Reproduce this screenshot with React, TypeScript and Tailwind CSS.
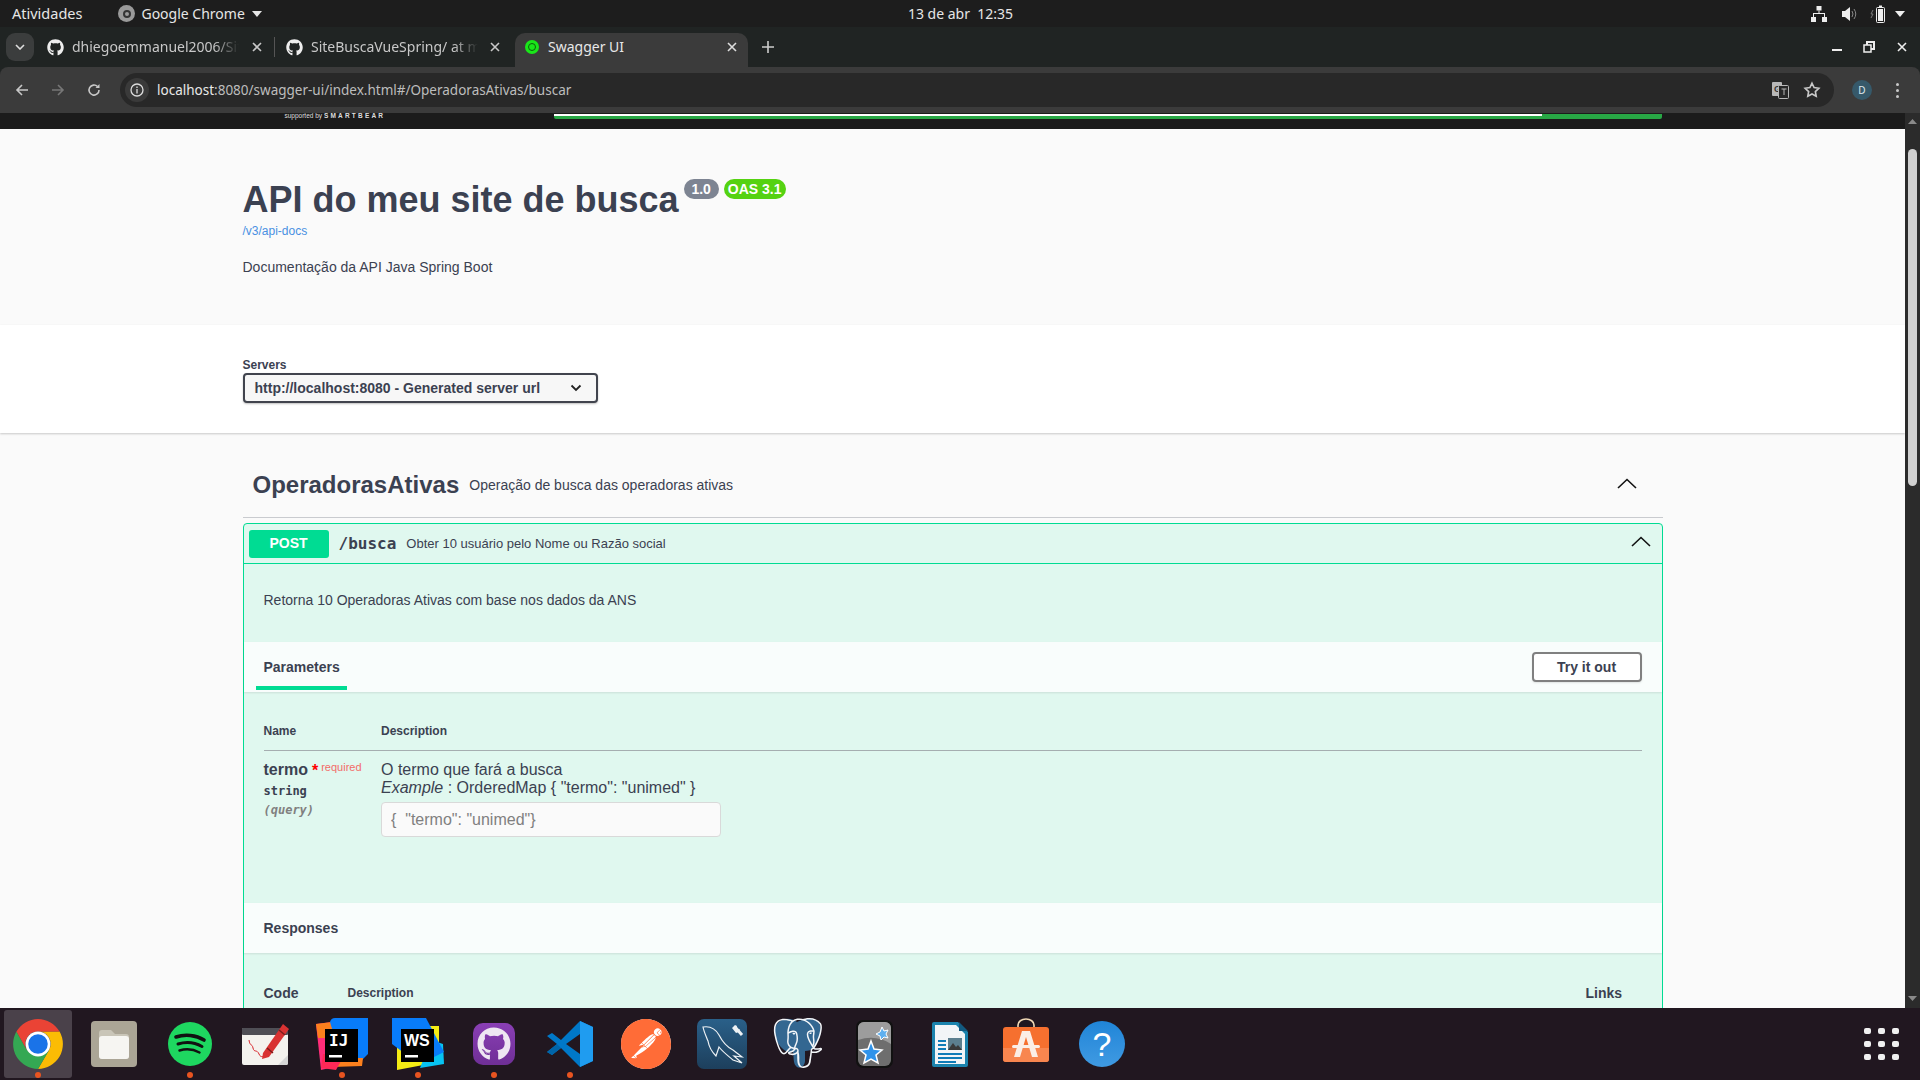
import React from "react";
import { FaGithub } from "react-icons/fa";
import { SiPostgresql, SiPostman } from "react-icons/si";

const sans = "font-['Liberation_Sans',Arial,sans-serif]";
const mono = "font-['DejaVu_Sans_Mono',monospace]";

const ChevronUp = () => (
  <svg width="20" height="11" viewBox="0 0 20 11" fill="none">
    <polyline points="1,10 10,1.5 19,10" stroke="#111" strokeWidth="1.6" />
  </svg>
);

const CloseX = ({ color = "#c8c8c8" }: { color?: string }) => (
  <svg width="12" height="12" viewBox="0 0 12 12" fill="none">
    <path d="M2 2l8 8M10 2l-8 8" stroke={color} strokeWidth="1.6" />
  </svg>
);

const Chrome = ({ size = 52 }: { size?: number }) => (
  <svg width={size} height={size} viewBox="0 0 48 48">
    <path d="M43.9 12.5A23 23 0 0 1 24 47L34 30A11.5 11.5 0 0 0 24 12.5Z" fill="#fbbc04" />
    <path d="M4.1 12.5A23 23 0 0 0 24 47L34 30H14Z" fill="#34a853" />
    <path d="M4.1 12.5A23 23 0 0 1 43.9 12.5H24A11.5 11.5 0 0 0 14 30Z" fill="#ea4335" />
    <circle cx="24" cy="24" r="11.5" fill="#fff" />
    <circle cx="24" cy="24" r="9" fill="#1a73e8" />
  </svg>
);

const Files = () => (
  <svg width="46" height="46" viewBox="0 0 46 46">
    <rect width="46" height="46" rx="4" fill="#aba596" />
    <path d="M8 12a3 3 0 0 1 3-3h9l4 4h11a3 3 0 0 1 3 3v19a3 3 0 0 1-3 3H11a3 3 0 0 1-3-3Z" fill="#c9c5b8" />
    <path d="M8 18a3 3 0 0 1 3-3h24a3 3 0 0 1 3 3v17a3 3 0 0 1-3 3H11a3 3 0 0 1-3-3Z" fill="#f6f5f2" />
  </svg>
);

const Spotify = () => (
  <svg width="44" height="44" viewBox="0 0 44 44" fill="none">
    <circle cx="22" cy="22" r="22" fill="#1ed760" />
    <path d="M8 15c9-3 20-2 28 3" stroke="#111" strokeWidth="3.6" strokeLinecap="round" />
    <path d="M10 22c8-2.5 17-1.5 24 2.5" stroke="#111" strokeWidth="3" strokeLinecap="round" />
    <path d="M11.5 28.5c7-2 14-1.2 20 2" stroke="#111" strokeWidth="2.5" strokeLinecap="round" />
  </svg>
);

const Editor = () => (
  <svg width="48" height="42" viewBox="0 0 48 42">
    <rect y="5" width="46" height="37" rx="2" fill="#f4f2ee" />
    <rect y="5" width="46" height="7" rx="1" fill="#4f4e55" />
    <path d="M36 42l10-10v8a2 2 0 0 1-2 2Z" fill="#d6d6d6" />
    <path d="M7 17c1 7 3 3 4 8s4 1 6 6 5 1 7 2" stroke="#d8232a" strokeWidth="1" fill="none" />
    <path d="M21 30L41 1l6 5L27 34l-7 2Z" fill="#d93232" />
    <path d="M25 25l6 5M37 7l6 5" stroke="#7d1c1c" strokeWidth="1.5" />
  </svg>
);

const IntelliJ = () => (
  <svg width="52" height="52" viewBox="0 0 52 52">
    <path d="M0 6l16-2 6 44-17 4Z" fill="#ff2d78" />
    <path d="M0 6l16-2 4 16H2Z" fill="#fc801d" />
    <path d="M14 4q1-4 5-4h33v36l-8 8H26Z" fill="#087cfa" />
    <path d="M20 40h27l-1 8-30 1Z" fill="#fc801d" />
    <path d="M5 50l2-14h22l-9 16Z" fill="#fe2857" />
    <rect x="9" y="11" width="33" height="33" fill="#000" />
    <text x="13" y="28" fontFamily="DejaVu Sans Mono, monospace" fontSize="16" fontWeight="700" fill="#fff">IJ</text>
    <rect x="13" y="37" width="13" height="2.5" fill="#fff" />
  </svg>
);

const WebStorm = () => (
  <svg width="52" height="52" viewBox="0 0 52 52">
    <path d="M5 8h42v36L5 52Z" fill="#f5ec14" />
    <path d="M28 50l24-4-1-20-12-4Z" fill="#07c3f2" />
    <path d="M0 0h34l18 34-12 6-24-2-16-12Z" fill="#087cfa" />
    <rect x="9" y="11" width="33" height="33" fill="#000" />
    <text x="12" y="28" fontFamily="Liberation Sans, sans-serif" fontSize="16" fontWeight="700" fill="#fff">WS</text>
    <rect x="13" y="37" width="13" height="2.5" fill="#fff" />
  </svg>
);

const GitHubDock = () => (
  <div className="w-[42px] h-[42px] rounded-[10px] bg-gradient-to-b from-[#8a3fb5] to-[#6f2f96] flex items-center justify-center">
    <FaGithub size={34} color="#eee6f2" />
  </div>
);

const VSCode = () => (
  <svg width="46" height="46" viewBox="0 0 46 46">
    <path d="M33 0l13 6v34l-13 6L14 27 5 34 0 31l10-8L0 15l5-3 9 7Z" fill="#0078c8" />
    <path d="M33 0l13 6v34l-13 6Z" fill="#1f9cf0" />
    <path d="M33 13v20L19 23Z" fill="#211720" />
    <path d="M0 31l5 3 9-7-4-4Z" fill="#0065a9" />
  </svg>
);

const Postman = () => (
  <div className="w-[50px] h-[50px] rounded-full bg-white flex items-center justify-center">
    <SiPostman size={50} color="#ff6c37" />
  </div>
);

// Workbench icon: dolphin outline plus a small wrench
const MySQLDock = () => (
  <svg width="50" height="50" viewBox="0 0 50 50">
    <defs>
      <linearGradient id="wb" x1="0" y1="0" x2="0" y2="1">
        <stop offset="0" stopColor="#2a6089" />
        <stop offset="1" stopColor="#1d3f5c" />
      </linearGradient>
    </defs>
    <rect width="50" height="50" rx="7" fill="url(#wb)" />
    <path
      d="M6 8C12 7 18 9 22 16C26 24 30 28 36 31L45 38L37 37L45 44L36 41C30 36 26 33 22 28L19 37C15 33 12 28 11 22C9 17 7 13 6 8Z"
      fill="none"
      stroke="#eef2f5"
      strokeWidth="1.2"
    />
    <path d="M38 8l7 8" stroke="#eef2f5" strokeWidth="3" />
    <path d="M35 9l3-3 2 1-1 3 2 1 2-1-1 3-3 1Z" fill="#eef2f5" />
  </svg>
);

const Postgres = () => (
  <div className="relative w-[50px] h-[52px]">
    <svg width="50" height="52" viewBox="0 0 50 52" className="absolute inset-0">
      <path d="M4 6c6-7 14-6 20-2 7-4 17-5 22 1 4 7 1 17-5 24-2 3-6 4-9 4v10c0 5-6 9-9 5-3-3-2-9-3-14-5 1-11-2-15-9C1 19 0 11 4 6Z" fill="#336791" />
    </svg>
    <SiPostgresql size={50} color="#f3f6f9" className="absolute inset-0" />
  </div>
);

const Anki = () => (
  <svg width="37" height="48" viewBox="0 0 37 48">
    <rect width="37" height="48" rx="7" fill="#111" />
    <rect x="2" y="2" width="33" height="44" rx="6" fill="#6e6e6e" />
    <path d="M2 8a6 6 0 0 1 6-6h21a6 6 0 0 1 6 6v16Q20 14 2 20Z" fill="#9c9c9c" />
    <path d="M26 7l2 4 4-1-2 4 2 4-4-1-3 3-1-4-4-2 4-2Z" fill="#5fb0ef" stroke="#fff" />
    <path d="M15 21l3 8 8 1-6 5 2 8-7-4-7 4 2-8-6-5 8-1Z" fill="#2f93ea" stroke="#fff" strokeWidth="1.5" />
  </svg>
);

const Writer = () => (
  <svg width="36" height="45" viewBox="0 0 36 45">
    <path d="M2 0h24l10 10v33a2 2 0 0 1-2 2H2a2 2 0 0 1-2-2V2a2 2 0 0 1 2-2Z" fill="#1b83ad" />
    <path d="M3 3h21l9 9v30H3Z" fill="#f2f5f7" />
    <path d="M27 0l9 9h-9Z" fill="#135a80" />
    <rect x="6" y="18" width="8" height="2" fill="#0f7cb8" />
    <rect x="6" y="22" width="8" height="2" fill="#0f7cb8" />
    <rect x="6" y="26" width="8" height="2" fill="#0f7cb8" />
    <rect x="16" y="16" width="14" height="12" fill="#5c7f8f" />
    <path d="M16 28l5-7 3 4 2-2 4 5Z" fill="#3a3a3a" />
    <rect x="6" y="31" width="24" height="2" fill="#0f7cb8" />
    <rect x="6" y="35" width="24" height="2" fill="#0f7cb8" />
    <rect x="6" y="39" width="18" height="2" fill="#0f7cb8" />
  </svg>
);

const AppStore = () => (
  <svg className="mb-[8px]" width="46" height="44" viewBox="0 0 46 44">
    <path d="M15 10V7a8 6 0 0 1 16 0v3" stroke="#f0d9b5" strokeWidth="1.6" fill="none" />
    <rect y="9" width="46" height="35" rx="3" fill="#f6702f" />
    <path d="M0 30h46v11a3 3 0 0 1-3 3H3a3 3 0 0 1-3-3Z" fill="#f8864f" />
    <path d="M19 13h8l8 26h-6l-6-20-6 20h-6Z" fill="#fbeee6" />
    <rect x="9" y="27" width="28" height="3" rx="1.5" fill="#fbeee6" />
  </svg>
);

const Help = () => (
  <div className={`w-[46px] h-[46px] rounded-full bg-gradient-to-b from-[#1f85d8] to-[#3f9ae2] flex items-center justify-center text-white text-[34px] leading-none ${sans}`}>
    ?
  </div>
);

// dock slots are 76px wide, running dots only on the open apps
const dockApps: { icon: React.ReactNode; running?: boolean; active?: boolean }[] = [
  { icon: <Chrome />, running: true, active: true },
  { icon: <Files /> },
  { icon: <Spotify />, running: true },
  { icon: <Editor /> },
  { icon: <IntelliJ />, running: true },
  { icon: <WebStorm />, running: true },
  { icon: <GitHubDock />, running: true },
  { icon: <VSCode />, running: true },
  { icon: <Postman /> },
  { icon: <MySQLDock /> },
  { icon: <Postgres /> },
  { icon: <Anki /> },
  { icon: <Writer /> },
  { icon: <AppStore /> },
  { icon: <Help /> },
];

const OsBar = () => (
  <div className="h-[27px] shrink-0 bg-[#1d1d1d] flex items-center text-[#e6e6e6] text-[14px] font-['Noto_Sans',sans-serif]">
    <div className="flex-1 flex items-center pl-3">
      <span className="text-[14.5px]">Atividades</span>
      <span className="ml-[36px] w-[17px] h-[17px] rounded-full bg-[#9a9a9a] flex items-center justify-center">
        <span className="w-[8px] h-[8px] rounded-full border-2 border-[#333]" />
      </span>
      <span className="ml-[6px]">Google Chrome</span>
      <svg className="ml-[7px]" width="10" height="6" viewBox="0 0 10 6">
        <path d="M0 0h10L5 6Z" fill="#e6e6e6" />
      </svg>
    </div>
    <span className="ml-[4px] whitespace-pre">13 de abr  12:35</span>
    <div className="flex-1 flex items-center justify-end pr-[15px]">
      <svg width="16" height="16" viewBox="0 0 16 16" fill="#eee">
        <rect x="5.5" y="0" width="5" height="4.5" />
        <rect x="0" y="11" width="5" height="5" />
        <rect x="11" y="11" width="5" height="5" />
        <path d="M7.5 4.5h1V7H14v4h-1V8H3v3H2V7h5.5Z" />
      </svg>
      <svg className="ml-[14px]" width="16" height="16" viewBox="0 0 16 16" fill="#eee">
        <path d="M1 5h3l5-4v14l-5-4H1Z" />
        <path d="M11 5q2 3 0 6M13 3q3.500 5 0 10" stroke="#888" fill="none" />
      </svg>
      <svg className="ml-[13px]" width="18" height="18" viewBox="0 0 18 18">
        <path d="M3 5L1 9h2l-2 4" stroke="#777" fill="none" />
        <rect x="6.500" y="2.500" width="8" height="15" rx="1" fill="none" stroke="#eee" />
        <rect x="8" y="4" width="5" height="12" fill="#eee" />
        <rect x="9" y="0.500" width="3" height="2" fill="#eee" />
      </svg>
      <svg className="ml-[7px]" width="10" height="6" viewBox="0 0 10 6">
        <path d="M0 0h10L5 6Z" fill="#eee" />
      </svg>
    </div>
  </div>
);

const TabStrip = () => (
  <div className="h-[40px] shrink-0 bg-[#202423] flex items-center text-[14px] font-['Noto_Sans',sans-serif]">
    <div className="ml-[6px] w-[28px] h-[28px] rounded-[9px] bg-[#3b3d3d] flex items-center justify-center">
      <svg width="10" height="6" viewBox="0 0 10 6" fill="none">
        <path d="M1 1l4 4 4-4" stroke="#ddd" strokeWidth="1.6" />
      </svg>
    </div>
    <div className="ml-[13px] w-[228px] h-[20px] flex items-center border-r border-[#555] text-[#c8c8c8]">
      <FaGithub size={17} color="#eee" className="shrink-0" />
      <div className="ml-2 w-[167px] -mt-[2px] overflow-hidden whitespace-nowrap [mask-image:linear-gradient(to_right,black_85%,transparent)]">
        dhiegoemmanuel2006/SiteBuscaVueSpring
      </div>
      <span className="ml-3">
        <CloseX />
      </span>
    </div>
    <div className="w-[240px] h-[20px] pl-[11px] flex items-center text-[#c8c8c8]">
      <FaGithub size={17} color="#eee" className="shrink-0" />
      <div className="ml-2 w-[167px] -mt-[2px] overflow-hidden whitespace-nowrap [mask-image:linear-gradient(to_right,black_85%,transparent)]">
        SiteBuscaVueSpring/ at main · dhiego
      </div>
      <span className="ml-[11px]">
        <CloseX />
      </span>
    </div>
    <div className="self-end w-[233px] h-[34px] rounded-t-[10px] bg-[#3b3b3b] pl-[10px] pr-[10px] pb-[6px] flex items-center text-[#e8e8e8]">
      <span className="w-[14px] h-[14px] rounded-full bg-[#19e619] flex items-center justify-center">
        <span className="w-[8px] h-[8px] rounded-full border border-[#0b5f0b]" />
      </span>
      <span className="ml-[9px] -mt-[1px]">Swagger UI</span>
      <span className="ml-auto">
        <CloseX color="#ddd" />
      </span>
    </div>
    <svg className="ml-[14px]" width="12" height="12" viewBox="0 0 12 12" fill="none">
      <path d="M6 0v12M0 6h12" stroke="#ccc" strokeWidth="1.600" />
    </svg>
    <div className="ml-auto flex items-center pr-[2px]">
      <div className="w-[32px] flex justify-center">
        <span className="mt-[6px] w-[10px] h-[2px] bg-[#eee]" />
      </div>
      <div className="w-[32px] flex justify-center">
        <svg width="12" height="12" viewBox="0 0 12 12" fill="none">
          <rect x="4" y="1" width="7" height="7" stroke="#eee" strokeWidth="2" />
          <rect x="1" y="4" width="7" height="7" fill="#202423" stroke="#eee" strokeWidth="1.500" />
        </svg>
      </div>
      <div className="w-[33px] flex justify-center">
        <CloseX color="#eee" />
      </div>
    </div>
  </div>
);

const Toolbar = () => (
  <div className="h-[46px] shrink-0 bg-[#3b3b3b] rounded-t-[8px] flex items-center font-['Noto_Sans',sans-serif]">
    <div className="ml-[4px] w-[36px] flex justify-center">
      <svg width="14" height="14" viewBox="0 0 14 14" fill="none">
        <path d="M13 7H2M7 2L2 7l5 5" stroke="#c8c8c8" strokeWidth="1.600" />
      </svg>
    </div>
    <div className="w-[36px] flex justify-center">
      <svg width="14" height="14" viewBox="0 0 14 14" fill="none">
        <path d="M1 7h11M7 2l5 5-5 5" stroke="#777" strokeWidth="1.600" />
      </svg>
    </div>
    <div className="w-[36px] flex justify-center">
      <svg width="14" height="14" viewBox="0 0 14 14" fill="none">
        <path d="M12 7a5 5 0 1 1-1.500-3.500" stroke="#c8c8c8" strokeWidth="1.600" />
        <path d="M12.500 1v4h-4Z" fill="#c8c8c8" />
      </svg>
    </div>
    <div className="ml-[8px] w-[1714px] h-[34px] rounded-full bg-[#282828] flex items-center">
      <div className="ml-[5px] w-[24px] h-[24px] rounded-full bg-[#3a3a3a] flex items-center justify-center">
        <svg width="14" height="14" viewBox="0 0 14 14" fill="none">
          <circle cx="7" cy="7" r="6" stroke="#ddd" strokeWidth="1.300" />
          <path d="M7 6v4.500M7 3.500v1.500" stroke="#ddd" strokeWidth="1.300" />
        </svg>
      </div>
      <span className="ml-2 text-[13.5px] text-[#bdbdbd]">
        <span className="text-[#e8e8e8]">localhost</span>:8080/swagger-ui/index.html#/OperadorasAtivas/buscar
      </span>
      <div className="ml-auto flex items-center pr-[13px]">
        <svg width="17" height="17" viewBox="0 0 17 17">
          <rect x="0" y="0" width="10" height="14" rx="1" fill="#b8b8b8" />
          <text x="2" y="10" fontFamily="Liberation Sans, sans-serif" fontSize="9" fontWeight="700" fill="#333">G</text>
          <rect x="6.500" y="3.500" width="10" height="13" rx="1" fill="#282828" stroke="#b8b8b8" />
          <path d="M9.500 7h5M12 7v6" stroke="#b8b8b8" />
        </svg>
        <svg className="ml-[14px]" width="18" height="18" viewBox="0 0 24 24" fill="none" stroke="#c8c8c8" strokeWidth="2.200">
          <path d="M12 3l2.800 5.800 6.300.9-4.600 4.400 1.100 6.300L12 17.400l-5.600 3 1.100-6.300L2.900 9.700l6.300-.9Z" />
        </svg>
      </div>
    </div>
    <div className="ml-[18px] w-[20px] h-[20px] rounded-full bg-[#36596a] flex items-center justify-center text-[10px] text-[#dfe8ec]">
      D
    </div>
    <div className="ml-[24px] flex flex-col gap-[3px]">
      <span className="w-[3px] h-[3px] rounded-full bg-[#c8c8c8]" />
      <span className="w-[3px] h-[3px] rounded-full bg-[#c8c8c8]" />
      <span className="w-[3px] h-[3px] rounded-full bg-[#c8c8c8]" />
    </div>
  </div>
);

const SwaggerPage = () => (
  <div className={`flex-1 h-full overflow-hidden bg-[#fafafa] text-[#3b4151] ${sans}`}>
    {/* swagger top bar, scrolled away: only its bottom edge shows */}
    <div className="h-[16px] bg-[#1b1b1b] overflow-hidden">
      <div className="w-[1460px] mx-auto px-5 flex">
        <span className="ml-[42px] w-[100px] text-[6.5px] leading-[5px] text-[#ddd] whitespace-nowrap">
          supported by <b className="tracking-[2.2px]">SMARTBEAR</b>
        </span>
        <div className="ml-[169px] w-[1108px] h-[5px] mt-[1px] rounded-b-[2px] bg-[#28a745] flex items-start">
          <span className="w-[988px] h-[2px] bg-white" />
        </div>
      </div>
    </div>

    <div className="h-[196px] pt-[50px]">
      <div className="w-[1460px] mx-auto px-5">
        <div className="flex items-start h-[42px]">
          <h2 className="text-[36px] leading-[42px] font-bold">API do meu site de busca</h2>
          <span className="ml-[5px] w-[35px] h-[20px] rounded-full bg-[#7d8492] text-white text-[14px] font-bold flex items-center justify-center">
            1.0
          </span>
          <span className="ml-[5px] w-[62px] h-[20px] rounded-full bg-[#55d211] text-white text-[14px] font-bold flex items-center justify-center whitespace-nowrap">
            OAS 3.1
          </span>
        </div>
        <div className="mt-[3px] text-[12px] leading-[14px] text-[#4990e2]">/v3/api-docs</div>
        <p className="mt-[19px] text-[14px] leading-[20px]">Documentação da API Java Spring Boot</p>
      </div>
    </div>

    <div className="h-[108px] bg-white pt-[33px] shadow-[0_1px_2px_0_rgba(0,0,0,0.2)] relative">
      <div className="w-[1460px] mx-auto px-5">
        <div className="text-[12px] leading-[14px] font-bold">Servers</div>
        <div className="mt-[1px] w-[355px] h-[30px] pl-[10px] pr-[14px] flex items-center justify-between border-2 border-[#41444e] rounded-[4px] bg-[#f7f7f7] text-[14px] font-bold shadow-[0_1px_2px_0_rgba(0,0,0,0.25)]">
          http://localhost:8080 - Generated server url
          <svg width="12" height="8" viewBox="0 0 12 8" fill="none">
            <path d="M1.500 1.500L6 6l4.500-4.500" stroke="#222" strokeWidth="1.800" />
          </svg>
        </div>
      </div>
    </div>

    <div className="w-[1460px] mx-auto px-5">
      <div className="h-[85px] pt-[20px] pl-[10px] pr-[26px] flex items-center border-b border-[#c9cbcf]">
        <h3 className="text-[24px] font-bold">OperadorasAtivas</h3>
        <span className="ml-[10px] mt-[1px] text-[14px]">Operação de busca das operadoras ativas</span>
        <span className="ml-auto mb-[4px]">
          <ChevronUp />
        </span>
      </div>

      <div className="mt-[5px] border border-[#00dc93] rounded-[4px] bg-[#e0f8ef] h-[1200px]">
        <div className="h-[40px] p-[5px] flex items-center border-b border-[#00dc93]">
          <span className="w-[80px] h-[28px] rounded-[3px] bg-[#00dc93] text-white text-[14px] font-bold flex items-center justify-center">
            POST
          </span>
          <span className={`ml-[10px] text-[16px] font-bold ${mono}`}>/busca</span>
          <span className="ml-[10px] text-[13px]">Obter 10 usuário pelo Nome ou Razão social</span>
          <span className="ml-auto mr-[6px] mb-[5px]">
            <ChevronUp />
          </span>
        </div>

        <div className="h-[78px] pt-[26px] pl-5 text-[14px] leading-[20px]">
          Retorna 10 Operadoras Ativas com base nos dados da ANS
        </div>

        <div className="h-[50px] bg-[#f9fdfc] shadow-[0_1px_2px_rgba(0,0,0,0.1)] flex items-start justify-between pr-5">
          <div className="ml-3 mt-[4px] w-[91px] h-[44px] pl-2 pt-[3px] flex items-center border-b-4 border-[#00dc93] text-[14px] font-bold">
            Parameters
          </div>
          <button className="mt-[10px] w-[110px] h-[30px] border-2 border-[#808080] rounded-[4px] bg-white text-[14px] font-bold text-[#3b4151] shadow-[0_1px_2px_rgba(0,0,0,0.1)]">
            Try it out
          </button>
        </div>

        <div className="h-[211px] pt-[32px] px-5">
          <div className="flex pb-3 border-b border-[#a5aeb0] text-[12px] leading-[14px] font-bold">
            <div className="w-[117.5px]">Name</div>
            <div>Description</div>
          </div>
          <div className="flex pt-[10px]">
            <div className="w-[117.5px]">
              <div className="flex items-start h-[18px]">
                <span className="text-[16px] leading-[18px] font-bold">termo</span>
                <span className="ml-[4px] text-[16px] leading-[20px] font-bold text-[#ff0000]">*</span>
                <span className="ml-[3px] -mt-[1px] text-[11px] leading-[14px] text-[#ff0000]/60">required</span>
              </div>
              <div className={`mt-[5px] text-[12px] leading-[14px] font-bold ${mono}`}>string</div>
              <div className={`mt-[5px] text-[12px] leading-[14px] font-bold italic text-[#808080] ${mono}`}>(query)</div>
            </div>
            <div className="text-[16px] leading-[18px]">
              <div>O termo que fará a busca</div>
              <div>
                <i>Example</i> : OrderedMap {'{ "termo": "unimed" }'}
              </div>
              <input
                readOnly
                value={'{  "termo": "unimed"}'}
                className="mt-[5px] block w-[340px] h-[35px] px-[9px] bg-[#fafafa] border border-[#d9d9d9] rounded-[4px] text-[16px] text-[#808080] whitespace-pre"
              />
            </div>
          </div>
        </div>

        <div className="h-[50px] bg-[#f9fdfc] shadow-[0_1px_2px_rgba(0,0,0,0.1)] pl-5 flex items-center text-[14px] font-bold">
          Responses
        </div>

        <div className="pt-[30px] px-5 flex items-center">
          <div className="w-[84px] text-[14px] leading-[20px] font-bold">Code</div>
          <div className="text-[12px] leading-[20px] font-bold">Description</div>
          <div className="ml-auto w-[56px] text-[14px] leading-[20px] font-bold">Links</div>
        </div>
      </div>
    </div>
  </div>
);

const Scrollbar = () => (
  <div className="w-[15px] h-full shrink-0 bg-[#2b2b2b] flex flex-col items-center pt-[6px]">
    <svg width="9" height="5" viewBox="0 0 9 5">
      <path d="M4.500 0L9 5H0Z" fill="#8a8a8a" />
    </svg>
    <div className="mt-[25px] w-[9px] h-[337px] rounded-[5px] bg-[#d0d0d0]" />
    <svg className="mt-auto mb-[7px]" width="9" height="5" viewBox="0 0 9 5">
      <path d="M0 0h9L4.500 5Z" fill="#8a8a8a" />
    </svg>
  </div>
);

const Dock = () => (
  <div className="h-[72px] shrink-0 bg-[#211720] flex items-center">
    {dockApps.map((app, i) => (
      <div key={i} className="w-[76px] h-[72px] flex justify-center items-center">
        <div
          className={
            app.active
              ? "w-[68px] h-[68px] pt-2 rounded-[3px] bg-[#4a414a] flex flex-col items-center"
              : "w-[68px] h-[68px] pt-2 flex flex-col items-center"
          }
        >
          <div className="h-[52px] flex items-center justify-center">{app.icon}</div>
          {app.running ? (
            <span className="mt-[2px] w-[6px] h-[6px] rounded-full bg-[#e95420]" />
          ) : (
            <span className="mt-[2px] h-[6px]" />
          )}
        </div>
      </div>
    ))}
    <div className="ml-auto mr-[21px] grid grid-cols-3 gap-x-[7px] gap-y-[7px]">
      {Array.from({ length: 9 }).map((_, i) => (
        <span key={i} className="w-[7px] h-[6px] rounded-[2px] bg-[#f0f0f0]" />
      ))}
    </div>
  </div>
);

export default function App() {
  return (
    <div className="w-[1920px] h-[1080px] overflow-hidden flex flex-col bg-[#202423]">
      <OsBar />
      <TabStrip />
      <Toolbar />
      <div className="flex-1 min-h-0 flex">
        <SwaggerPage />
        <Scrollbar />
      </div>
      <Dock />
    </div>
  );
}
